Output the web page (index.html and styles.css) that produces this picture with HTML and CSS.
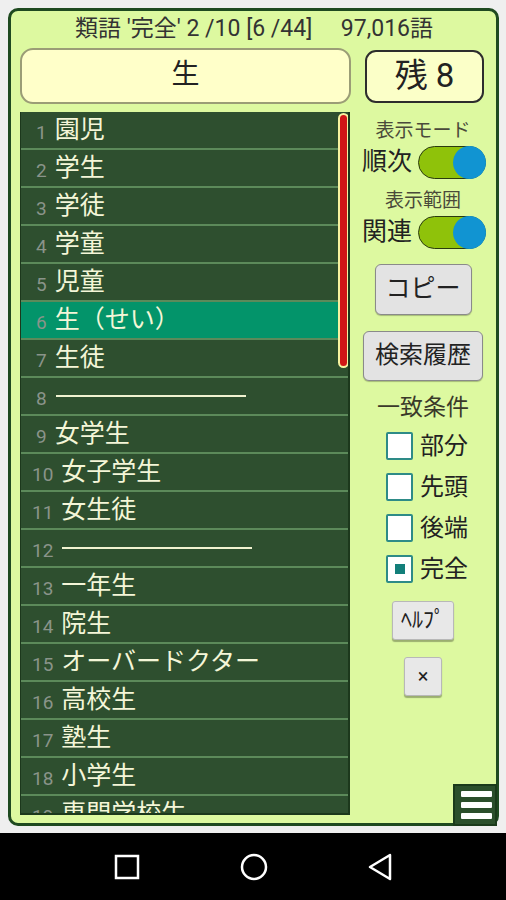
FILE: index.html
```html
<!DOCTYPE html>
<html lang="ja">
<head>
<meta charset="utf-8">
<link rel="stylesheet" href="styles.css">
</head>
<body>
<div class="screen">
  <div class="panel">
    <div class="header">類語 '完全' 2 /10 [6 /44]&nbsp;&nbsp;&nbsp;&nbsp; 97,016語</div>
    <div class="toprow">
      <div class="query">生</div>
      <div class="remain">残 8</div>
    </div>
    <div class="main">
      <div class="list">
        <div class="row"><span class="num">1</span><span class="word">園児</span></div>
        <div class="row"><span class="num">2</span><span class="word">学生</span></div>
        <div class="row"><span class="num">3</span><span class="word">学徒</span></div>
        <div class="row"><span class="num">4</span><span class="word">学童</span></div>
        <div class="row"><span class="num">5</span><span class="word">児童</span></div>
        <div class="row sel"><span class="num">6</span><span class="word">生（せい）</span></div>
        <div class="row"><span class="num">7</span><span class="word">生徒</span></div>
        <div class="row"><span class="num">8</span><span class="sep"></span></div>
        <div class="row"><span class="num">9</span><span class="word">女学生</span></div>
        <div class="row dd"><span class="num">10</span><span class="word">女子学生</span></div>
        <div class="row dd"><span class="num">11</span><span class="word">女生徒</span></div>
        <div class="row dd"><span class="num">12</span><span class="sep"></span></div>
        <div class="row dd"><span class="num">13</span><span class="word">一年生</span></div>
        <div class="row dd"><span class="num">14</span><span class="word">院生</span></div>
        <div class="row dd"><span class="num">15</span><span class="word">オーバードクター</span></div>
        <div class="row dd"><span class="num">16</span><span class="word">高校生</span></div>
        <div class="row dd"><span class="num">17</span><span class="word">塾生</span></div>
        <div class="row dd"><span class="num">18</span><span class="word">小学生</span></div>
        <div class="row dd"><span class="num">19</span><span class="word">専門学校生</span></div>
        <div class="scrollbar"></div>
      </div>
      <div class="side">
        <div class="label">表示モード</div>
        <div class="togglerow"><span class="tlabel">順次</span><span class="toggle"><span class="knob"></span></span></div>
        <div class="label label2">表示範囲</div>
        <div class="togglerow"><span class="tlabel">関連</span><span class="toggle"><span class="knob"></span></span></div>
        <div class="btn copy">コピー</div>
        <div class="btn hist">検索履歴</div>
        <div class="cond">一致条件</div>
        <div class="checks">
          <div class="check"><span class="box"></span><span>部分</span></div>
          <div class="check"><span class="box"></span><span>先頭</span></div>
          <div class="check"><span class="box"></span><span>後端</span></div>
          <div class="check"><span class="box on"></span><span>完全</span></div>
        </div>
        <div class="btn small help">ﾍﾙﾌﾟ</div>
        <div class="btn small close">×</div>
      </div>
    </div>
    <div class="menu"><span></span><span></span><span></span></div>
  </div>
</div>
<div class="navbar">
  <svg width="26" height="26" viewBox="0 0 26 26"><rect x="2" y="2" width="22" height="22" fill="none" stroke="#fff" stroke-width="2.5"/></svg>
  <svg width="28" height="28" viewBox="0 0 28 28"><circle cx="14" cy="14" r="12" fill="none" stroke="#fff" stroke-width="2.5"/></svg>
  <svg width="26" height="28" viewBox="0 0 26 28"><path d="M23 2 L3 14 L23 26 Z" fill="none" stroke="#fff" stroke-width="2.5" stroke-linejoin="round"/></svg>
</div>
</body>
</html>
```
FILE: styles.css
```css
* { box-sizing: border-box; }
html, body { margin: 0; padding: 0; }
body {
  width: 506px;
  height: 900px;
  background: #efefef;
  font-family: Roboto, "Noto Sans CJK JP", sans-serif;
  overflow: hidden;
}
.screen {
  height: 833px;
  padding: 8px 7px 7px 8px;
}
.panel {
  position: relative;
  height: 818px;
  background: #ddf9a0;
  border: 3px solid #1f4a20;
  border-radius: 10px;
  padding: 0 0 0 9px;
  display: flex;
  flex-direction: column;
}
.header {
  height: 37px;
  line-height: 36px;
  font-size: 23px;
  color: #333;
  text-align: center;
  padding-right: 8px;
  white-space: nowrap;
}
.toprow {
  display: flex;
  align-items: center;
  height: 56px;
}
.query {
  width: 331px;
  height: 56px;
  background: #ffffc9;
  border: 2px solid #9b9d76;
  border-radius: 13px;
  font-size: 28px;
  line-height: 50px;
  text-align: center;
  color: #222;
}
.remain {
  margin-left: 14px;
  width: 119px;
  height: 53px;
  background: #fbffc8;
  border: 2px solid #2d2d2d;
  border-radius: 11px;
  font-size: 33px;
  line-height: 48px;
  text-align: center;
  color: #222;
}
.main {
  display: flex;
  margin-top: 8px;
  height: 703px;
}
.list {
  position: relative;
  width: 330px;
  height: 703px;
  background: #2e4f2f;
  border-left: 1px solid #1c381c;
  border-right: 2px solid #1c381c;
  border-bottom: 2px solid #1c381c;
  overflow: hidden;
}
.row {
  height: 38px;
  border-bottom: 2px solid #5c8a5a;
  display: flex;
  align-items: center;
  padding-left: 15px;
  white-space: nowrap;
}
.row.dd { padding-left: 11px; }
.row.sel { background: #03946a; }
.num {
  font-size: 19px;
  color: #8a948a;
  margin-right: 8px;
  padding-top: 4px;
}
.word {
  font-size: 25px;
  color: #f4f6d8;
  line-height: 36px;
}
.sep {
  display: block;
  width: 190px;
  height: 2px;
  background: #f0f2d0;
  margin-left: 1px;
}
.scrollbar {
  position: absolute;
  top: 1px;
  left: 317px;
  width: 11px;
  height: 255px;
  background: #d01616;
  border: 2px solid #f6f2a0;
  border-radius: 6px;
}
.side {
  flex: 1;
  display: flex;
  flex-direction: column;
  align-items: center;
  color: #222;
}
.label {
  font-size: 19px;
  color: #4a4a3a;
  line-height: 24px;
  margin-top: 7px;
}
.label2 { margin-top: 10px; }
.togglerow {
  display: flex;
  align-items: center;
  gap: 6px;
  margin-top: 2px;
  margin-left: 2px;
}
.tlabel {
  font-size: 25px;
  line-height: 34px;
  color: #222;
}
.toggle {
  position: relative;
  width: 68px;
  height: 33px;
  background: #8fc20a;
  border: 1.5px solid #2a3a10;
  border-radius: 17px;
}
.knob {
  position: absolute;
  right: -1px;
  top: -1px;
  width: 33px;
  height: 33px;
  background: #1194d2;
  border-radius: 50%;
}
.btn {
  background: #e3e3e3;
  border: 1.5px solid #8a8a8a;
  border-radius: 6px;
  text-align: center;
  color: #222;
  box-shadow: 0 1px 1px rgba(0,0,0,0.25);
}
.copy {
  margin-top: 15px;
  width: 97px;
  height: 51px;
  font-size: 25px;
  line-height: 48px;
}
.hist {
  margin-top: 16px;
  width: 120px;
  height: 50px;
  font-size: 24px;
  line-height: 47px;
}
.cond {
  margin-top: 12px;
  font-size: 23px;
  line-height: 30px;
  color: #3a3a2a;
}
.checks {
  display: flex;
  flex-direction: column;
  gap: 13px;
  margin-top: 9px;
  margin-left: 8px;
}
.check {
  display: flex;
  align-items: center;
  gap: 7px;
  font-size: 24px;
  line-height: 28px;
  color: #222;
}
.box {
  position: relative;
  width: 27px;
  height: 28px;
  background: #fff;
  border: 2px solid #2e8b87;
  border-radius: 2px;
}
.box.on::after {
  content: "";
  position: absolute;
  left: 7px;
  top: 7px;
  width: 10px;
  height: 10px;
  background: #137f7a;
}
.small {
  height: 39px;
  border-radius: 3px;
  background: #e8e8e8;
  border: 1px solid #b8b8b8;
  box-shadow: 0 2px 1px rgba(0,0,0,0.3);
}
.help {
  margin-top: 18px;
  width: 62px;
  font-size: 22px;
  line-height: 36px;
}
.close {
  margin-top: 17px;
  width: 38px;
  font-size: 20px;
  line-height: 36px;
}
.menu {
  position: absolute;
  right: -1px;
  bottom: -3px;
  width: 44px;
  height: 42px;
  background: #2b4f2b;
  border: 2px solid #1a3a1a;
  display: flex;
  flex-direction: column;
  justify-content: center;
  gap: 5px;
  padding: 0 3px 0 6px;
}
.menu span {
  display: block;
  height: 6px;
  background: #fff;
  border-radius: 1px;
}
.navbar {
  height: 67px;
  background: #000;
  display: flex;
  align-items: center;
  justify-content: space-between;
  padding: 0 113px 0 114px;
}
```
